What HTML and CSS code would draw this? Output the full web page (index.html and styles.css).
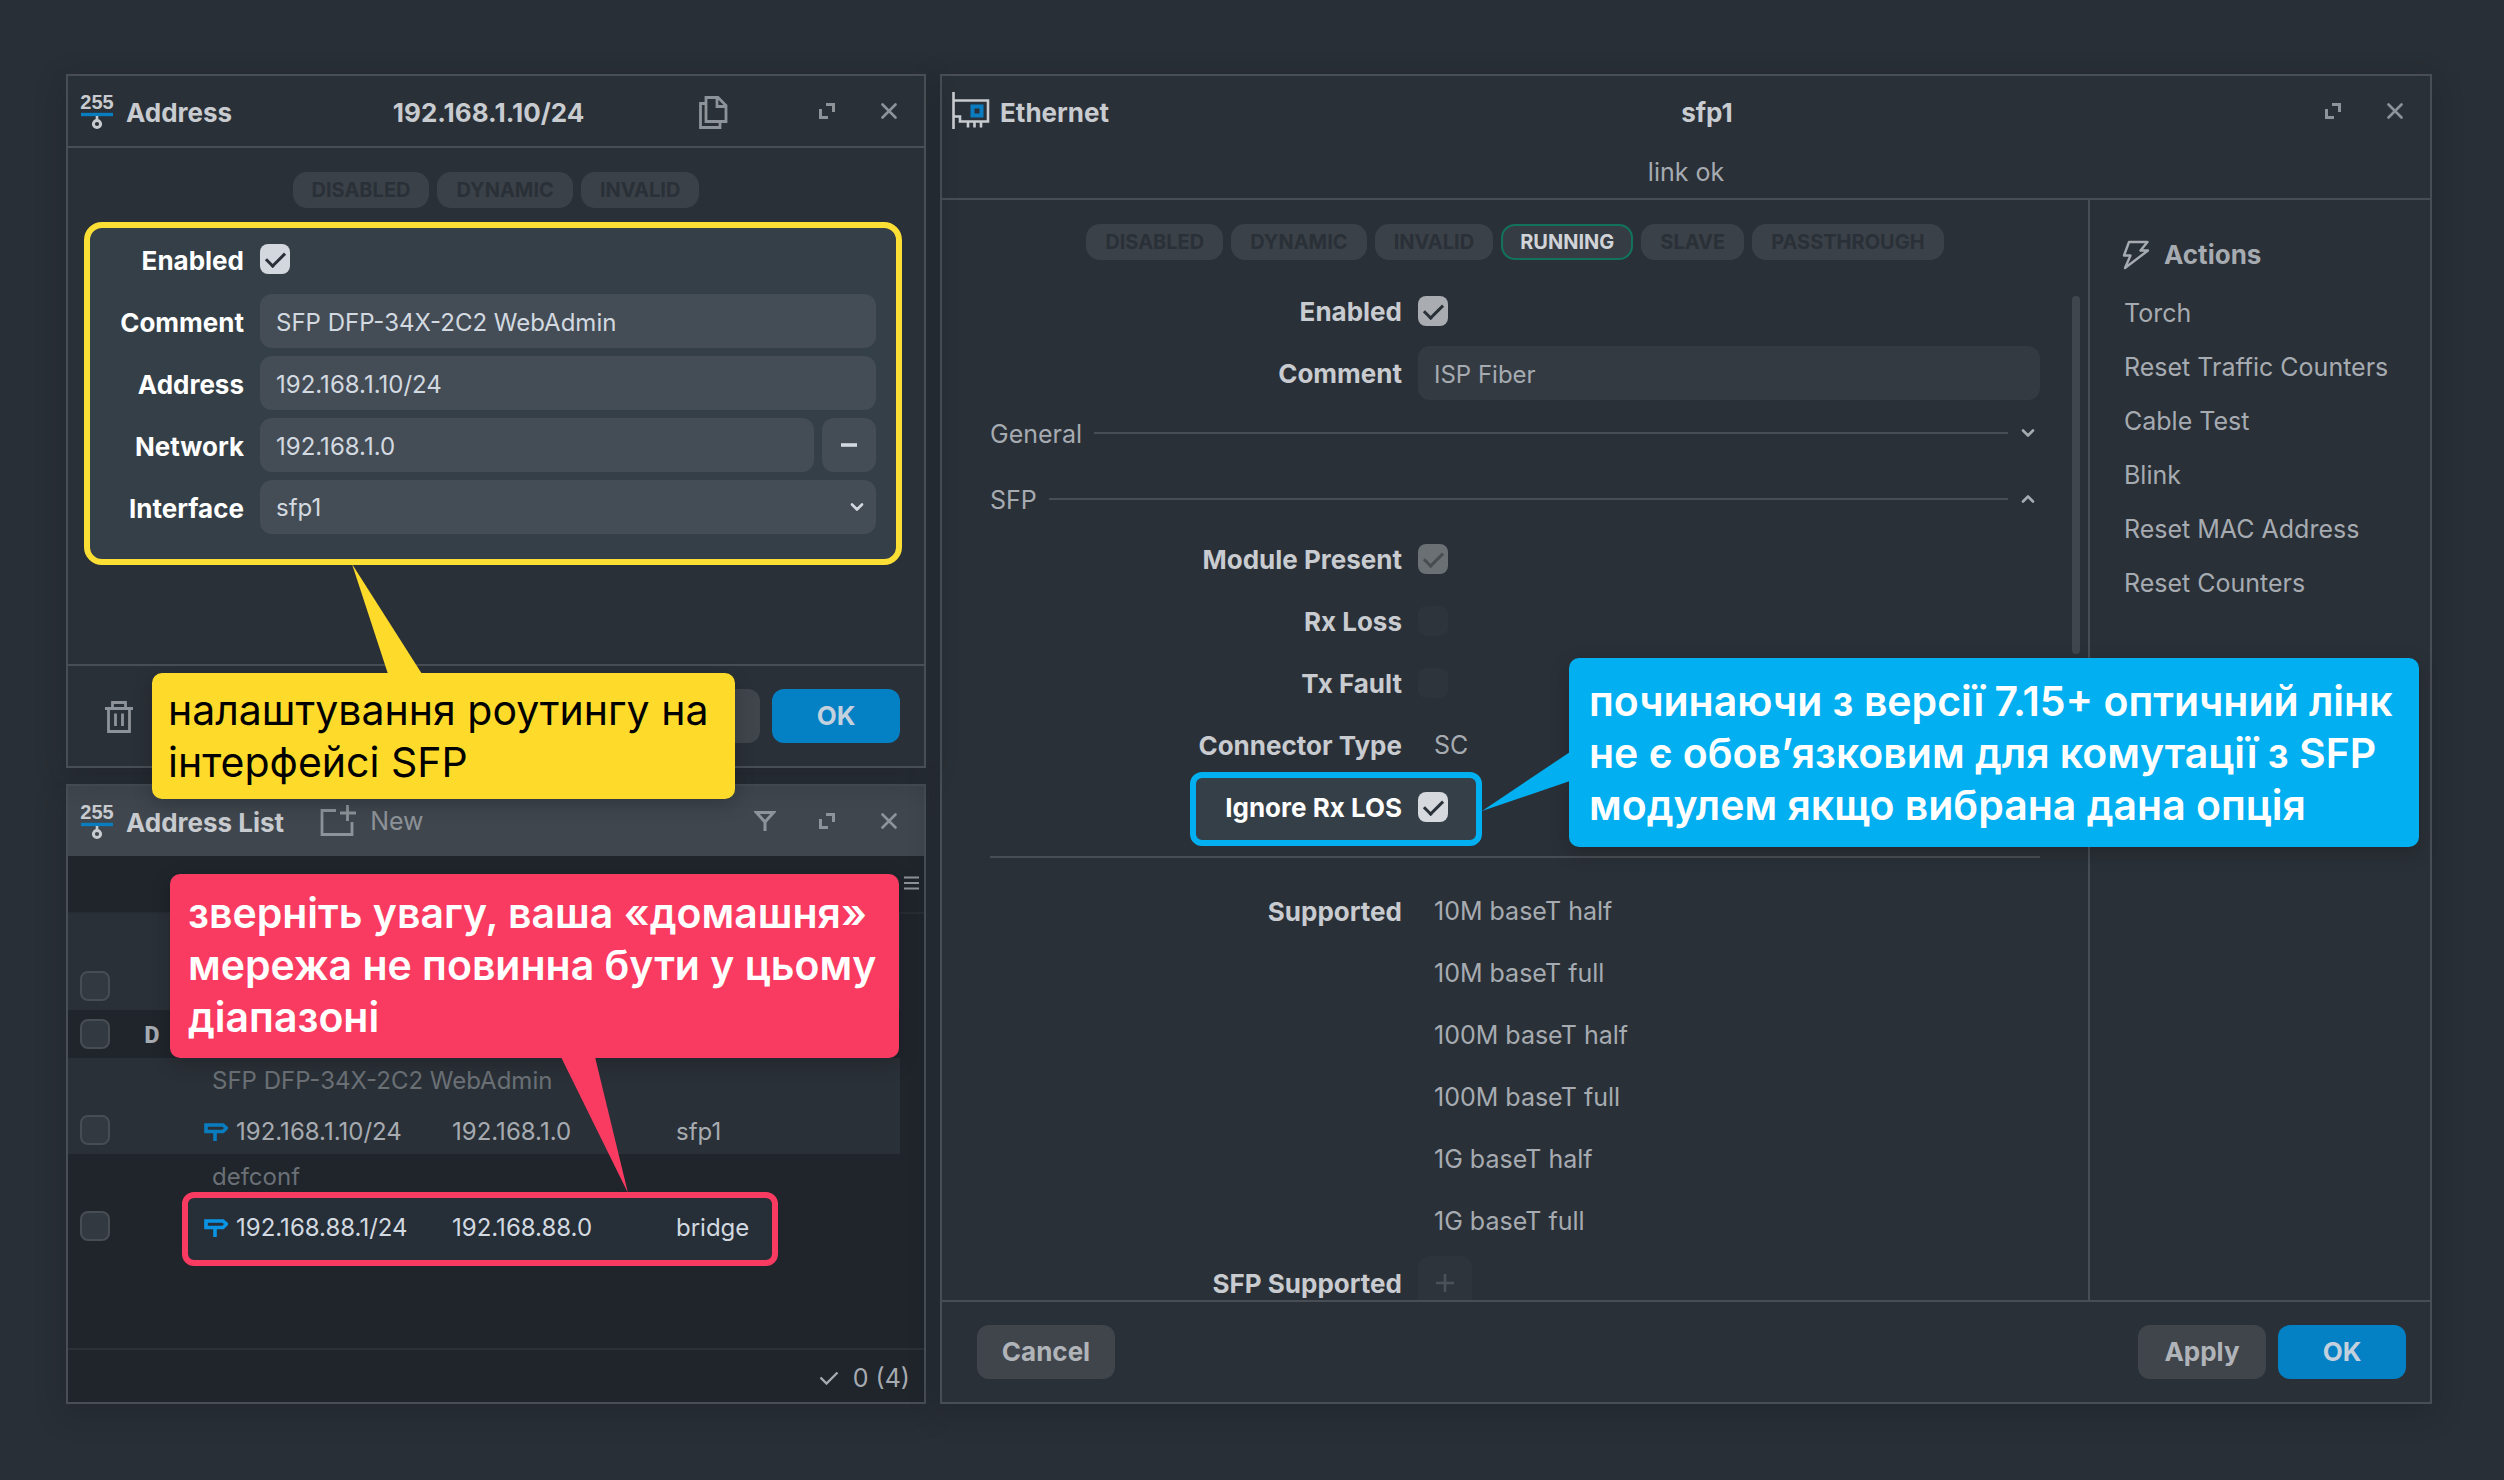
FILE: index.html
```html
<!DOCTYPE html>
<html lang="uk">
<head>
<meta charset="utf-8">
<title>WebFig: SFP</title>
<link rel="stylesheet" href="styles.css">
</head>
<body>
<svg class="sprite" aria-hidden="true">
  <symbol id="i-max" viewBox="0 0 16 16"><path d="M7 1.500h7.500V9M1.500 6v8.500H9" fill="none" stroke="currentColor" stroke-width="3"/></symbol>
  <symbol id="i-close" viewBox="0 0 16 16"><path d="M1.500 1.500l13 13M14.500 1.500l-13 13" fill="none" stroke="currentColor" stroke-width="2.600" stroke-linecap="round"/></symbol>
  <symbol id="i-chev" viewBox="0 0 16 10"><path d="M3 2.500l5 5 5-5" fill="none" stroke="currentColor" stroke-width="2.600" stroke-linecap="round" stroke-linejoin="round"/></symbol>
  <symbol id="i-route" viewBox="0 0 24 20"><path d="M2 3h17l3.500 3-3.500 3.500H2zM11 10v9" fill="none" stroke="currentColor" stroke-width="3.600"/></symbol>
</svg>

<main class="desktop">
  <div class="column">
    <section class="window window-address">
      <header class="titlebar">
        <svg class="icon-addr" viewBox="0 0 34 38" aria-hidden="true"><text x="17" y="17" text-anchor="middle" class="addr-digits">255</text><path d="M1 22.500h32" stroke="#0a7cc0" stroke-width="3.400"/><path d="M17 24v5" stroke="currentColor" stroke-width="2.600"/><circle cx="17" cy="32" r="3.600" fill="none" stroke="currentColor" stroke-width="3"/></svg>
        <h2 class="title">Address</h2>
        <span class="subject subject-offset">192.168.1.10/24</span>
        <button class="tool tool-copy" aria-label="Copy"><svg width="30" height="34" viewBox="0 0 30 34" fill="none" stroke="currentColor" stroke-width="2.800"><path d="M8 2.500h12l8 8v16H8zM19 3v8.500h9M7.500 8.500H2.500v24H22v-5"/></svg></button>
        <div class="tools">
          <button class="tool" aria-label="Maximize"><svg width="16" height="16"><use href="#i-max"/></svg></button>
          <button class="tool" aria-label="Close"><svg width="16" height="16"><use href="#i-close"/></svg></button>
        </div>
      </header>
      <div class="address-body">
        <div class="badges"><span class="badge">DISABLED</span><span class="badge">DYNAMIC</span><span class="badge">INVALID</span></div>
        <form class="spotlight">
          <div class="row"><label for="a-en">Enabled</label><input id="a-en" type="checkbox" class="check" checked></div>
          <div class="row"><label for="a-co">Comment</label><input id="a-co" class="field" type="text" value="SFP DFP-34X-2C2 WebAdmin"></div>
          <div class="row"><label for="a-ad">Address</label><input id="a-ad" class="field" type="text" value="192.168.1.10/24"></div>
          <div class="row"><label for="a-ne">Network</label><div class="with-button"><input id="a-ne" class="field" type="text" value="192.168.1.0"><button type="button" class="mini" aria-label="Remove"><svg width="16" height="16"><path d="M0 8h16" stroke="currentColor" stroke-width="3.600"/></svg></button></div></div>
          <div class="row"><label for="a-in">Interface</label><div class="select-wrap"><select id="a-in" class="field"><option>sfp1</option></select><svg class="select-arrow" width="16" height="10"><use href="#i-chev"/></svg></div></div>
        </form>
      </div>
      <footer class="actions-bar">
        <button class="tool" aria-label="Delete"><svg width="28" height="34" viewBox="0 0 28 34" fill="none" stroke="currentColor" stroke-width="2.800"><path d="M0 8.500h28M7.500 8V2.500h13V8M3.500 9v22.500h21V9M10.500 13.500v12.500M17.500 13.500v12.500"/></svg></button>
        <button class="btn push" aria-label="Apply"></button>
        <button class="btn btn-primary">OK</button>
      </footer>
      <aside class="callout callout-yellow">
        <svg class="tail" width="70" height="110"><path d="M0 0l36 110h34z" fill="currentColor"/></svg>
        <p>налаштування роутингу на<br>інтерфейсі SFP</p>
      </aside>
    </section>

    <section class="window window-list">
      <header class="titlebar titlebar-active">
        <svg class="icon-addr" viewBox="0 0 34 38" aria-hidden="true"><text x="17" y="17" text-anchor="middle" class="addr-digits">255</text><path d="M1 22.500h32" stroke="#0a7cc0" stroke-width="3.400"/><path d="M17 24v5" stroke="currentColor" stroke-width="2.600"/><circle cx="17" cy="32" r="3.600" fill="none" stroke="currentColor" stroke-width="3"/></svg>
        <h2 class="title">Address List</h2>
        <button class="new"><svg width="36" height="32" viewBox="0 0 36 32" fill="none" stroke="currentColor" stroke-width="2.800"><path d="M16 5.500H2v24h30V17M20 8h16M27.500 0v16"/></svg>New</button>
        <div class="tools">
          <button class="tool" aria-label="Filter"><svg width="22" height="22" viewBox="0 0 22 22" fill="none" stroke="currentColor" stroke-width="3"><path d="M2.500 2.500h17L11 12zM11 11v10"/></svg></button>
          <button class="tool" aria-label="Maximize"><svg width="16" height="16"><use href="#i-max"/></svg></button>
          <button class="tool" aria-label="Close"><svg width="16" height="16"><use href="#i-close"/></svg></button>
        </div>
      </header>
      <div class="columns-bar"><button class="columns" aria-label="Columns"><svg width="15" height="14"><path d="M0 1.500h15M0 7h15M0 12.500h15" stroke="currentColor" stroke-width="2"/></svg></button></div>
      <div class="list-body">
        <div class="spot-row"></div>
        <table class="list">
          <colgroup><col class="c-check"><col class="c-flag"><col class="c-addr"><col class="c-net"><col></colgroup>
          <tbody>
            <tr class="odd"><td></td><td></td><td colspan="3"></td></tr>
            <tr class="odd"><td class="pick-cell"><input type="checkbox" class="pick" aria-label="Select row 1"></td><td></td><td></td><td></td><td></td></tr>
            <tr><td class="pick-cell"><input type="checkbox" class="pick" aria-label="Select row 2"></td><td class="flag">D</td><td></td><td></td><td></td></tr>
            <tr class="odd"><td></td><td></td><td colspan="3" class="note">SFP DFP-34X-2C2 WebAdmin</td></tr>
            <tr class="odd"><td class="pick-cell"><input type="checkbox" class="pick" aria-label="Select row 3"></td><td></td><td><span class="addr"><svg width="24" height="20"><use href="#i-route"/></svg>192.168.1.10/24</span></td><td>192.168.1.0</td><td>sfp1</td></tr>
            <tr><td></td><td></td><td colspan="3" class="note">defconf</td></tr>
            <tr class="lit"><td class="pick-cell"><input type="checkbox" class="pick" aria-label="Select row 4"></td><td></td><td><span class="addr"><svg width="24" height="20"><use href="#i-route"/></svg>192.168.88.1/24</span></td><td>192.168.88.0</td><td>bridge</td></tr>
          </tbody>
        </table>
      </div>
      <footer class="status"><svg width="20" height="14" viewBox="0 0 20 14"><path d="M1.500 6.500l6 6L18.500 1.500" fill="none" stroke="currentColor" stroke-width="2.400"/></svg>0 (4)</footer>
      <aside class="callout callout-pink">
        <svg class="tail" width="70" height="136"><path d="M0 0h34l33 136z" fill="currentColor"/></svg>
        <p>зверніть увагу, ваша «домашня»<br>мережа не повинна бути у цьому<br>діапазоні</p>
      </aside>
    </section>
  </div>

  <section class="window window-ethernet">
    <header class="eth-head">
      <div class="titlebar">
        <svg class="icon-eth" width="38" height="38" viewBox="0 0 38 38" fill="none" stroke="currentColor" stroke-width="2.600"><path d="M1.500 0v37M2 8.500h34v21H8v-5H2M16 30v5.500M22.500 30v5.500M29 30v5.500"/><path d="M20.500 14.500h9v9h-9z" stroke="#0a7cc0" stroke-width="4"/></svg>
        <h2 class="title">Ethernet</h2>
        <span class="subject">sfp1</span>
        <div class="tools">
          <button class="tool" aria-label="Maximize"><svg width="16" height="16"><use href="#i-max"/></svg></button>
          <button class="tool" aria-label="Close"><svg width="16" height="16"><use href="#i-close"/></svg></button>
        </div>
      </div>
      <p class="link-state">link ok</p>
    </header>
    <div class="eth-body">
      <div class="eth-main">
        <div class="badges"><span class="badge">DISABLED</span><span class="badge">DYNAMIC</span><span class="badge">INVALID</span><span class="badge badge-on">RUNNING</span><span class="badge">SLAVE</span><span class="badge">PASSTHROUGH</span></div>
        <div class="scroller">
          <form class="eth-form">
            <div class="erow"><label for="e-en">Enabled</label><input id="e-en" type="checkbox" class="check" checked></div>
            <div class="erow"><label for="e-co">Comment</label><input id="e-co" class="field" type="text" value="ISP Fiber"></div>
            <button type="button" class="section section-closed"><span class="section-name">General</span><span class="rule"></span><svg width="16" height="10"><use href="#i-chev"/></svg></button>
            <button type="button" class="section section-open"><span class="section-name">SFP</span><span class="rule"></span><svg width="16" height="10"><use href="#i-chev"/></svg></button>
            <div class="erow"><label for="e-mp">Module Present</label><input id="e-mp" type="checkbox" class="check" checked disabled></div>
            <div class="erow"><label for="e-rx">Rx Loss</label><input id="e-rx" type="checkbox" class="check" disabled></div>
            <div class="erow"><label for="e-tx">Tx Fault</label><input id="e-tx" type="checkbox" class="check" disabled></div>
            <div class="erow"><span class="name">Connector Type</span><span class="value">SC</span></div>
            <div class="erow erow-lit"><label for="e-ig">Ignore Rx LOS</label><input id="e-ig" type="checkbox" class="check" checked></div>
            <hr class="divider">
            <div class="erow"><span class="name">Supported</span><span class="value">10M baseT half</span></div>
            <div class="erow"><span></span><span class="value">10M baseT full</span></div>
            <div class="erow"><span></span><span class="value">100M baseT half</span></div>
            <div class="erow"><span></span><span class="value">100M baseT full</span></div>
            <div class="erow"><span></span><span class="value">1G baseT half</span></div>
            <div class="erow"><span></span><span class="value">1G baseT full</span></div>
            <div class="erow"><span class="name">SFP Supported</span><button type="button" class="mini mini-dim" aria-label="Add"><svg width="18" height="18"><path d="M0 9h18M9 0v18" stroke="currentColor" stroke-width="2.600"/></svg></button></div>
          </form>
          <div class="scrollbar"></div>
        </div>
      </div>
      <nav class="side">
        <h3 class="side-title"><svg width="28" height="30" viewBox="0 0 28 30" fill="none" stroke="currentColor" stroke-width="2.400" stroke-linejoin="round"><path d="M7 2h18.500l-7 8.500H26L3 28l5.500-12.500H2z"/></svg>Actions</h3>
        <a href="#torch">Torch</a>
        <a href="#reset-traffic">Reset Traffic Counters</a>
        <a href="#cable-test">Cable Test</a>
        <a href="#blink">Blink</a>
        <a href="#reset-mac">Reset MAC Address</a>
        <a href="#reset-counters">Reset Counters</a>
      </nav>
    </div>
    <footer class="actions-bar actions-eth">
      <button class="btn btn-cancel">Cancel</button>
      <button class="btn push">Apply</button>
      <button class="btn btn-primary">OK</button>
    </footer>
    <aside class="callout callout-blue">
      <svg class="tail" width="88" height="60"><path d="M88 0v29L0 59z" fill="currentColor"/></svg>
      <p>починаючи з версії 7.15+ оптичний лінк<br>не є обов’язковим для комутації з SFP<br>модулем якщо вибрана дана опція</p>
    </aside>
  </section>
</main>
</body>
</html>
```
FILE: styles.css
```css
:root {
  --bg: #292f36;
  --panel: #2a3037;
  --dark: #1f252b;
  --line: #484e54;
  --bright: #c8cbcf;
  --text: #a6abb1;
  --icon: #8d9399;
  --blue: #0480c4;
}

*, *::before, *::after { box-sizing: border-box; }

body {
  margin: 0;
  background: var(--bg);
  color: var(--text);
  font: 400 25px/32px Inter, "Noto Sans", sans-serif;
}

h2, h3, p { margin: 0; font-size: inherit; }
button, input, select { font: inherit; color: inherit; margin: 0; }
button { border: 0; padding: 0; background: none; }
svg { display: block; flex: none; }
.sprite { position: absolute; width: 0; height: 0; }
.push { margin-left: auto; }

.desktop {
  display: grid;
  grid-template-columns: minmax(0, 860fr) minmax(0, 1492fr);
  gap: 14px;
  min-height: 100vh;
  padding: 74px 72px 76px 66px;
}

.column { display: flex; flex-direction: column; gap: 16px; }

.window {
  position: relative;
  display: flex;
  flex-direction: column;
  border: 2px solid var(--line);
  background: var(--panel);
  box-shadow: 0 8px 28px rgba(20, 24, 30, 0.3);
}

.window-address { z-index: 2; }
.window-list { flex: 1; background: var(--dark); }

/* title bars */
.titlebar {
  display: flex;
  align-items: center;
  height: 70px;
  padding: 0 19px 0 12px;
}

.window-address .titlebar { height: 72px; border-bottom: 2px solid var(--line); }
.titlebar-active { background: #3f464d; }
.icon-addr { width: 34px; height: 38px; margin-right: 12px; color: var(--bright); }
.addr-digits { font: 700 20px "Liberation Sans", sans-serif; fill: currentColor; }
.icon-eth { margin-right: 10px; color: var(--bright); }
.title, .subject { color: var(--bright); font-size: 26px; font-weight: 700; padding-top: 4px; }
.subject { flex: 1; text-align: center; }
.subject-offset { padding-left: 48px; }
.tools { display: flex; gap: 30px; margin-left: 12px; }
.titlebar-active .tools { margin-left: auto; }
.tool { display: grid; place-items: center; width: 32px; height: 32px; color: var(--icon); }
.tool-copy { margin-right: 70px; }
.new { display: flex; align-items: center; gap: 14px; margin-left: 36px; color: var(--icon); }

/* state badges */
.badges { display: flex; justify-content: center; gap: 8px; padding-top: 24px; }
.badge {
  height: 36px;
  padding: 0 19px;
  border-radius: 14px;
  background: #3b4148;
  color: #2a3037;
  font-size: 20px;
  font-weight: 700;
  line-height: 36px;
}
.badge-on { padding: 0 17px; border: 2px solid #12735a; background: #353c43; color: #d0d3d7; line-height: 32px; }

/* form controls */
.field {
  width: 100%;
  min-width: 0;
  height: 54px;
  padding: 2px 16px 0;
  border: 0;
  border-radius: 12px;
  background: #343a42;
  font-size: 24px;
  appearance: none;
}

.check, .pick {
  width: 30px;
  height: 30px;
  border-radius: 8px;
  appearance: none;
  display: grid;
  place-items: center;
}
.check { background: #a9adb2; }
.check:checked::before {
  content: "";
  width: 19px;
  height: 11px;
  border-left: 3px solid #2a3037;
  border-bottom: 3px solid #2a3037;
  transform: translateY(-2px) rotate(-45deg);
}
.check:disabled { background: #2e343b; }
.check:checked:disabled { background: #6b7075; }
.check:checked:disabled::before { border-color: #484d52; }
.pick { border: 2px solid #474d53; background: #333940; }

.mini { display: grid; place-items: center; flex: none; width: 54px; height: 54px; border-radius: 12px; }
.mini-dim { background: #2e343b; color: #4c5258; }

/* address form */
.address-body { min-height: 516px; }
.spotlight {
  margin: 14px 22px 0 16px;
  padding: 4px 20px 25px 0;
  border: 6px solid #fbdf35;
  border-radius: 18px;
  background: #353f47;
  color: #d3d9e0;
}
.row { display: grid; grid-template-columns: 154px minmax(0, 1fr); column-gap: 16px; align-items: center; height: 54px; }
.row + .row { margin-top: 8px; }
.row label { padding-top: 4px; color: #fff; font-size: 26px; font-weight: 700; text-align: right; }
.spotlight .field, .spotlight .mini { background: #444d55; }
.spotlight .check { background: #d3d8de; }
.with-button { display: flex; gap: 8px; }
.select-wrap { position: relative; }
.select-arrow { position: absolute; right: 11px; top: 22px; pointer-events: none; }

/* bottom bars */
.actions-bar {
  display: flex;
  align-items: center;
  gap: 12px;
  height: 102px;
  padding: 0 24px 0 35px;
  border-top: 2px solid var(--line);
}
.btn {
  min-width: 128px;
  height: 54px;
  border-radius: 12px;
  background: #40454c;
  color: #b0b4b9;
  font-size: 26px;
  font-weight: 700;
}
.btn-primary { background: var(--blue); color: #c3d0de; }
.btn-cancel { min-width: 138px; }

/* address list */
.columns-bar { display: flex; justify-content: flex-end; height: 58px; padding: 18px 5px 0 0; border-bottom: 2px solid #272d33; }
.columns { height: 18px; color: var(--icon); }
.list-body { position: relative; flex: 1; min-height: 434px; padding-right: 24px; }
.list { position: relative; width: 100%; border-collapse: collapse; table-layout: fixed; font-size: 24px; }
.list td { height: 48px; padding: 4px 0 0; white-space: nowrap; }
.odd { background: var(--panel); }
.c-check { width: 76px; }
.c-flag { width: 60px; }
.c-addr { width: 248px; }
.c-net { width: 224px; }
.pick { margin-left: 12px; }
.list .pick-cell { padding-top: 0; }
.flag { font: 700 26px/32px "Liberation Mono", monospace; }
.list .note { padding: 0 0 2px 8px; color: #6a7076; }
.addr { display: flex; align-items: center; gap: 8px; }
.addr svg { color: #0a7cc0; }
.lit { color: #d3d9e0; }
.lit .addr svg { color: #0b94e4; }
.spot-row {
  position: absolute;
  left: 114px;
  top: 278px;
  width: 596px;
  height: 74px;
  border: 6px solid #f93b62;
  border-radius: 12px;
  background: #262f37;
}
.status { display: flex; justify-content: flex-end; align-items: center; gap: 14px; height: 54px; padding: 4px 14px 0 0; border-top: 2px solid #2b3137; }

/* ethernet */
.eth-head { border-bottom: 2px solid var(--line); }
.eth-head .titlebar { padding-left: 10px; }
.link-state { height: 52px; line-height: 52px; text-align: center; }
.eth-body { display: flex; flex: 1; min-height: 0; }
.eth-main { display: flex; flex: 1; flex-direction: column; min-width: 0; }
.scroller { display: flex; flex: 1; min-height: 0; margin-top: 20px; overflow: hidden; contain: size; }
.eth-form { flex: 1; min-width: 0; height: max-content; padding: 0 32px 0 48px; }
.scrollbar { width: 8px; height: 358px; margin: 16px 8px 0 0; border-radius: 4px; background: #40464d; }
.erow { display: grid; grid-template-columns: 412fr 622fr; column-gap: 16px; align-items: center; height: 62px; }
.erow label, .name { padding-top: 2px; color: var(--bright); font-size: 26px; font-weight: 700; text-align: right; }
.value { padding-left: 16px; }
.section { display: flex; align-items: center; gap: 12px; width: 100%; height: 58px; }
.section-closed { margin-bottom: 8px; }
.section-open svg { transform: rotate(180deg); }
.section-name { padding-top: 2px; }
.section svg { margin: 0 4px 0 0; }
.rule { flex: 1; height: 2px; background: var(--line); }
.divider { height: 2px; margin: 18px 0 22px; border: 0; background: var(--line); }
.erow-lit label { position: relative; z-index: 0; color: #fff; }
.erow-lit label::before {
  content: "";
  position: absolute;
  z-index: -1;
  right: -80px;
  top: -18px;
  width: 292px;
  height: 74px;
  border: 6px solid #02aff0;
  border-radius: 12px;
  background: #353f47;
}
.erow-lit .check { position: relative; z-index: 1; background: #d6d9dd; }

.side { width: 342px; padding: 28px 0 0 32px; border-left: 2px solid var(--line); }
.side-title { display: flex; align-items: center; gap: 14px; height: 54px; margin-bottom: 4px; font-size: 26px; }
.side a { display: block; padding-left: 2px; color: inherit; line-height: 54px; text-decoration: none; white-space: nowrap; }

/* annotations */
.callout {
  position: absolute;
  z-index: 3;
  border-radius: 10px;
  font-size: 41px;
  font-weight: 600;
  line-height: 52px;
  white-space: nowrap;
  box-shadow: 0 6px 20px rgba(0, 0, 0, 0.2);
}
.callout p { color: #fff; }
.tail { position: absolute; }
.callout-yellow { left: 84px; top: 597px; width: 583px; padding: 11px 16px 11px 16px; background: #fedb2b; color: #fedb2b; font-weight: 400; }
.callout-yellow p { color: #000; }
.callout-yellow .tail { left: 200px; top: -109px; }
.callout-pink { left: 102px; top: 88px; width: 729px; padding: 13px 18px 15px; background: #f93b62; color: #f93b62; }
.callout-pink .tail { left: 391px; top: 183px; }
.callout-blue { right: 11px; top: 582px; width: 850px; padding: 17px 20px 16px; background: #02aff0; color: #02aff0; }
.callout-blue .tail { left: -87px; top: 94px; }
```
